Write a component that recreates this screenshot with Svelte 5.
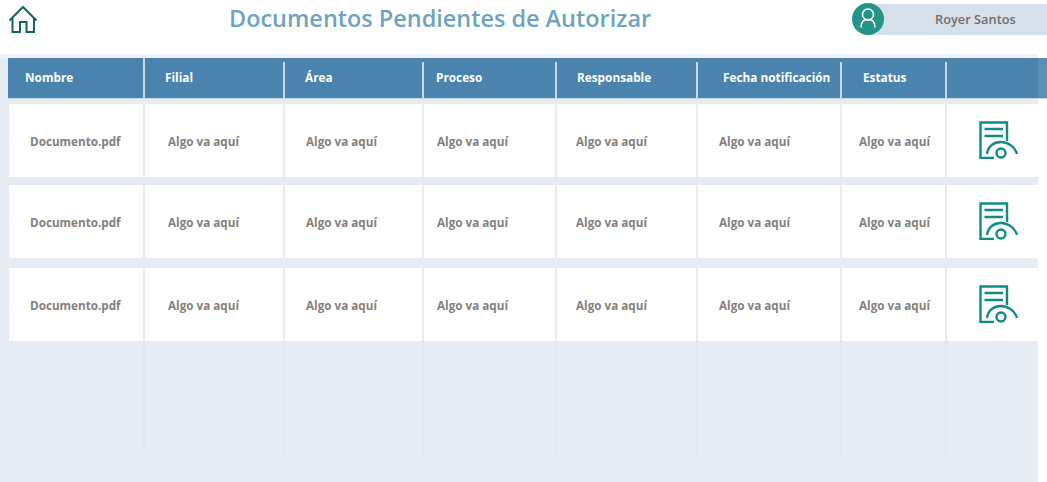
<script>
  const headers = ['Nombre', 'Filial', 'Área', 'Proceso', 'Responsable', 'Fecha notificación', 'Estatus', ''];
  const rows = [1, 2, 3];
  const blanks = ['Algo va aquí', 'Algo va aquí', 'Algo va aquí', 'Algo va aquí', 'Algo va aquí', 'Algo va aquí'];
</script>

<div class="page">
  <header class="top">
    <svg class="home" viewBox="0 0 30 30" aria-label="Inicio">
      <path d="M1.500 15.500 15 2 28.500 15.500M4.500 13.500V27H12V17H18.500V27H26V13.500" fill="none" stroke="#17645c" stroke-width="2" />
    </svg>
    <h1>Documentos Pendientes de Autorizar</h1>
    <div class="user">
      <span class="avatar">
        <svg viewBox="0 0 32 32" width="32" height="32" aria-hidden="true">
          <circle cx="16" cy="11.500" r="5.500" fill="none" stroke="#fff" stroke-width="1.500" />
          <path d="M9 24c0-5 3-7.500 7-7.500s7 2.500 7 7.500" fill="none" stroke="#fff" stroke-width="1.500" stroke-linecap="round" />
        </svg>
      </span>
      <span class="name">Royer Santos</span>
    </div>
  </header>

  <main class="panel">
    <div class="thead">
      {#each headers as h}
        <div class="th">{h}</div>
      {/each}
    </div>

    {#each rows as r}
      <div class="row">
        <div class="td">Documento.pdf</div>
        {#each blanks as b}
          <div class="td">{b}</div>
        {/each}
        <div class="td">
          <svg class="doc" viewBox="0 0 39 38" aria-label="Ver documento">
            <path d="M15 37H1.500V1.500H28V20" fill="none" stroke="#108a86" stroke-width="2.400" />
            <path d="M5.500 8H24M5.500 15H24" fill="none" stroke="#108a86" stroke-width="2.400" />
            <path d="M8 33C9 25 15 21 22 21S36 26 38 33" fill="none" stroke="#108a86" stroke-width="2.400" />
            <circle cx="22" cy="32" r="4.500" fill="none" stroke="#108a86" stroke-width="2.400" />
          </svg>
        </div>
      </div>
    {/each}

    <div class="filler">
      {#each headers as h}
        <div class="blank"></div>
      {/each}
    </div>
  </main>
</div>

<style>
  :global(body) {
    margin: 0;
    background: #fff;
    font-family: "Open Sans", "Liberation Sans", sans-serif;
    overflow: hidden;
  }

  .page {
    width: 1047px;
    height: 482px;
    display: flex;
    flex-direction: column;
    overflow: hidden;
  }

  .top {
    height: 54px;
    flex: none;
    display: flex;
    align-items: flex-start;
  }

  .home {
    width: 30px;
    height: 30px;
    margin: 5px 0 0 8px;
    flex: none;
  }

  h1 {
    margin: 0 0 0 191px;
    width: 423px;
    flex: none;
    font-size: 23.450px;
    line-height: 36px;
    font-weight: 600;
    color: #6fa3c0;
    white-space: nowrap;
  }

  .user {
    margin: 3px 0 0 200px;
    flex: 1;
    display: flex;
    align-items: center;
    height: 32px;
    background: linear-gradient(#d6dfec, #d6dfec) left 16px top 1px / 100% 31px no-repeat;
  }

  .avatar {
    width: 32px;
    height: 32px;
    border-radius: 50%;
    background: #229488;
    flex: none;
  }

  .name {
    margin-left: 51px;
    font-size: 12.800px;
    font-weight: 600;
    color: #716e6c;
    white-space: nowrap;
  }

  .panel {
    width: 1038px;
    flex: 1;
    background: #e6ecf4;
    border-top: 4px solid #eff3f8;
    box-sizing: border-box;
  }

  .thead, .row, .filler {
    display: grid;
    grid-template-columns: 137px 140px 139px 133px 141px 144px 105px 100px;
    margin-left: 8px;
    width: 1039px;
  }

  .thead {
    height: 41px;
    background: #4a83ae;
    border-bottom: 1px solid #c5d6e4;
    box-sizing: border-box;
    margin-bottom: 5px;
  }

  .th {
    display: flex;
    align-items: center;
    padding-bottom: 2px;
    font-size: 11.800px;
    font-weight: 700;
    color: #fff;
    white-space: nowrap;
    background: linear-gradient(#c9d8e6, #c9d8e6) right bottom / 2px calc(100% - 4px) no-repeat;
  }

  .th:nth-child(1) { padding-left: 17px; background-size: 2px 100%; }
  .th:nth-child(2) { padding-left: 20px; }
  .th:nth-child(3) { padding-left: 20px; }
  .th:nth-child(4) { padding-left: 12px; }
  .th:nth-child(5) { padding-left: 20px; }
  .th:nth-child(6) { padding-left: 25px; }
  .th:nth-child(7) { padding-left: 21px; }
  .th:nth-child(8) { background: linear-gradient(to right, #4a83ae 91px, #5b8eb4 91px); }

  .row {
    height: 73px;
    background: #fff;
    margin-bottom: 8px;
  }

  .row:nth-of-type(3) { margin-bottom: 10px; }

  .td {
    display: flex;
    align-items: center;
    font-size: 11.700px;
    font-weight: 700;
    color: #84807e;
    white-space: nowrap;
    box-sizing: border-box;
    border-right: 2px solid #e6ecf4;
  }

  .td:nth-child(1) { padding-left: 21px; border-left: 1px solid #e6ecf4; }
  .td:nth-child(2) { padding-left: 23px; }
  .td:nth-child(3) { padding-left: 21px; }
  .td:nth-child(4) { padding-left: 13px; }
  .td:nth-child(5) { padding-left: 19px; }
  .td:nth-child(6) { padding-left: 21px; }
  .td:nth-child(7) { padding-left: 17px; }
  .td:nth-child(8) { padding: 0 0 1px 32px; border-right: 0; }

  .doc {
    width: 39px;
    height: 38px;
    display: block;
  }

  .filler {
    height: 113px;
    margin-top: -8px;
  }

  .blank {
    border-right: 2px solid #e2e8f1;
  }

  .blank:last-child { border-right: 0; }
</style>
